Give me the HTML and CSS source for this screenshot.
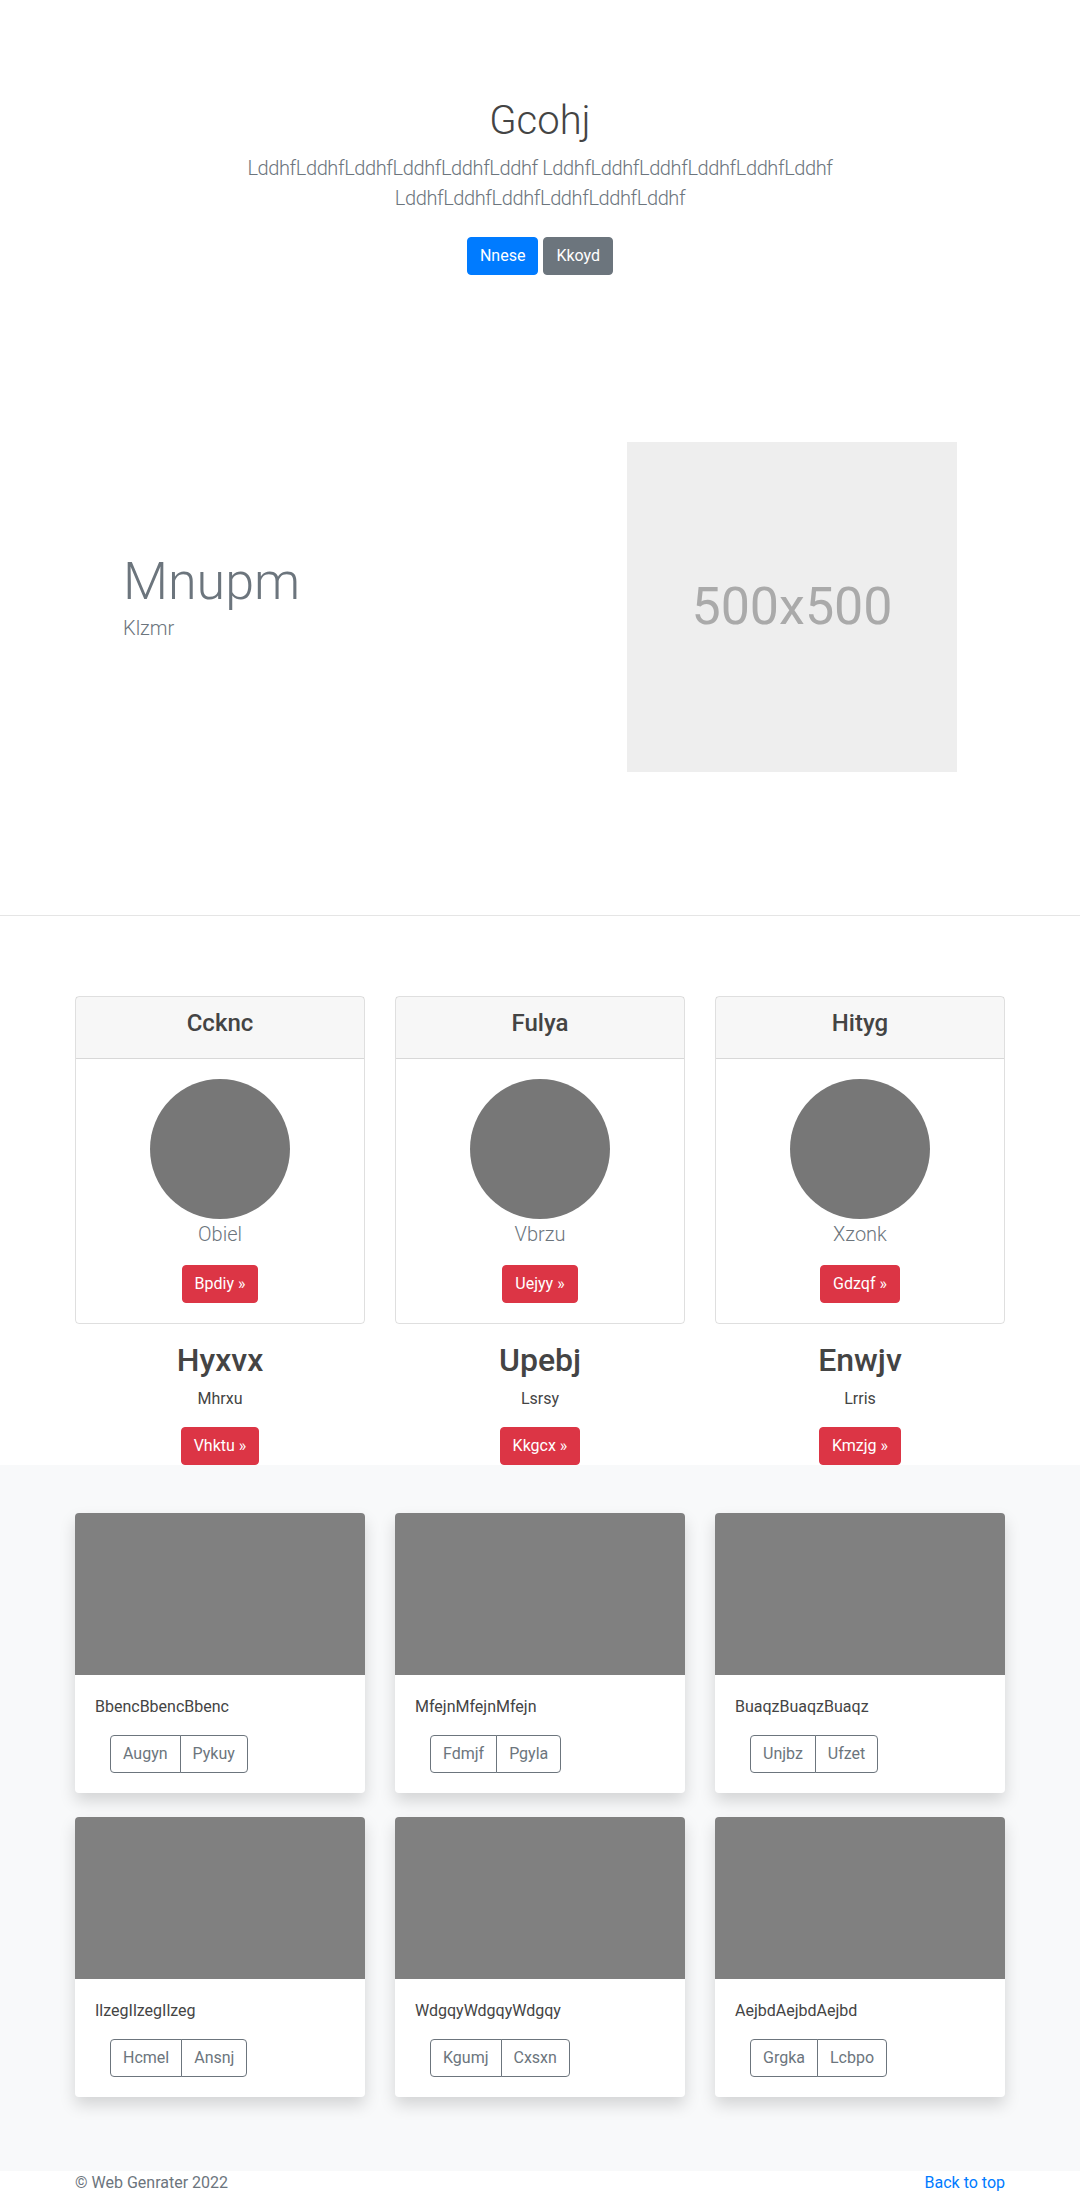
FILE: index.html
```html
<!DOCTYPE html>
<html lang="en">
<head>
<meta charset="utf-8">
<title>Gcohj</title>
<link rel="stylesheet" href="styles.css">
</head>
<body>
<header class="hero">
  <div class="hero-inner">
    <h1 class="hero-title">Gcohj</h1>
    <p class="lead">LddhfLddhfLddhfLddhfLddhfLddhf LddhfLddhfLddhfLddhfLddhfLddhf LddhfLddhfLddhfLddhfLddhfLddhf</p>
    <div class="hero-actions">
      <a class="btn btn-primary" href="#">Nnese</a>
      <a class="btn btn-secondary" href="#">Kkoyd</a>
    </div>
  </div>
</header>

<section class="featurette">
  <div class="container feature-row">
    <div class="feature-text">
      <h2 class="feature-heading">Mnupm</h2>
      <p class="feature-sub">Klzmr</p>
    </div>
    <div class="feature-media">
      <div class="placeholder"><span>500x500</span></div>
    </div>
  </div>
</section>

<hr class="divider">

<section class="marketing">
  <div class="container grid3">
    <div class="col">
      <div class="pcard">
        <div class="pcard-header"><h4>Ccknc</h4></div>
        <div class="pcard-body">
          <div class="circle"></div>
          <p class="pcard-text">Obiel</p>
          <a class="btn btn-danger" href="#">Bpdiy &raquo;</a>
        </div>
      </div>
      <h2 class="mk-title">Hyxvx</h2>
      <p class="mk-text">Mhrxu</p>
      <a class="btn btn-danger" href="#">Vhktu &raquo;</a>
    </div>
    <div class="col">
      <div class="pcard">
        <div class="pcard-header"><h4>Fulya</h4></div>
        <div class="pcard-body">
          <div class="circle"></div>
          <p class="pcard-text">Vbrzu</p>
          <a class="btn btn-danger" href="#">Uejyy &raquo;</a>
        </div>
      </div>
      <h2 class="mk-title">Upebj</h2>
      <p class="mk-text">Lsrsy</p>
      <a class="btn btn-danger" href="#">Kkgcx &raquo;</a>
    </div>
    <div class="col">
      <div class="pcard">
        <div class="pcard-header"><h4>Hityg</h4></div>
        <div class="pcard-body">
          <div class="circle"></div>
          <p class="pcard-text">Xzonk</p>
          <a class="btn btn-danger" href="#">Gdzqf &raquo;</a>
        </div>
      </div>
      <h2 class="mk-title">Enwjv</h2>
      <p class="mk-text">Lrris</p>
      <a class="btn btn-danger" href="#">Kmzjg &raquo;</a>
    </div>
  </div>
</section>

<section class="album">
  <div class="container grid3 album-grid">
    <div class="acard">
      <div class="acard-img"></div>
      <div class="acard-body">
        <p class="acard-text">BbencBbencBbenc</p>
        <div class="btn-group"><a class="btn btn-outline" href="#">Augyn</a><a class="btn btn-outline" href="#">Pykuy</a></div>
      </div>
    </div>
    <div class="acard">
      <div class="acard-img"></div>
      <div class="acard-body">
        <p class="acard-text">MfejnMfejnMfejn</p>
        <div class="btn-group"><a class="btn btn-outline" href="#">Fdmjf</a><a class="btn btn-outline" href="#">Pgyla</a></div>
      </div>
    </div>
    <div class="acard">
      <div class="acard-img"></div>
      <div class="acard-body">
        <p class="acard-text">BuaqzBuaqzBuaqz</p>
        <div class="btn-group"><a class="btn btn-outline" href="#">Unjbz</a><a class="btn btn-outline" href="#">Ufzet</a></div>
      </div>
    </div>
    <div class="acard">
      <div class="acard-img"></div>
      <div class="acard-body">
        <p class="acard-text">IlzegIlzegIlzeg</p>
        <div class="btn-group"><a class="btn btn-outline" href="#">Hcmel</a><a class="btn btn-outline" href="#">Ansnj</a></div>
      </div>
    </div>
    <div class="acard">
      <div class="acard-img"></div>
      <div class="acard-body">
        <p class="acard-text">WdgqyWdgqyWdgqy</p>
        <div class="btn-group"><a class="btn btn-outline" href="#">Kgumj</a><a class="btn btn-outline" href="#">Cxsxn</a></div>
      </div>
    </div>
    <div class="acard">
      <div class="acard-img"></div>
      <div class="acard-body">
        <p class="acard-text">AejbdAejbdAejbd</p>
        <div class="btn-group"><a class="btn btn-outline" href="#">Grgka</a><a class="btn btn-outline" href="#">Lcbpo</a></div>
      </div>
    </div>
  </div>
</section>

<footer class="footer">
  <div class="container footer-row">
    <p class="copy">&copy; Web Genrater 2022</p>
    <a class="back" href="#">Back to top</a>
  </div>
</footer>
</body>
</html>
```

FILE: styles.css
```css
* { box-sizing: border-box; }

body {
  margin: 0;
  font-family: Roboto, "Liberation Sans", sans-serif;
  font-size: 16px;
  line-height: 1.5;
  color: #212529;
  background: #fff;
}

p { margin: 0; }
h1, h2, h4 { margin: 0; }

.container {
  width: 960px;
  margin: 0 auto;
  padding: 0 15px;
}

/* Buttons */
.btn {
  display: inline-block;
  padding: 6px 12px;
  font-size: 16px;
  line-height: 24px;
  border: 1px solid transparent;
  border-radius: 4px;
  text-decoration: none;
  color: #fff;
  text-align: center;
}
.btn-primary { background: #007bff; border-color: #007bff; }
.btn-secondary { background: #6c757d; border-color: #6c757d; }
.btn-danger { background: #dc3545; border-color: #dc3545; }
.btn-outline { background: #fff; color: #6c757d; border-color: #6c757d; }

/* Hero */
.hero {
  text-align: center;
  padding: 97px 0 48px;
}
.hero-inner {
  width: 640px;
  margin: 0 auto;
}
.hero-title {
  font-size: 40px;
  line-height: 1.2;
  font-weight: 300;
  color: #444;
  margin-bottom: 8px;
}
.lead {
  font-size: 20px;
  line-height: 30px;
  font-weight: 300;
  letter-spacing: -0.4px;
  color: #6c757d;
  margin-bottom: 16px;
}
.hero-actions {
  display: flex;
  justify-content: center;
  gap: 5px;
  padding: 8px 0;
}

/* Featurette */
.featurette {
  padding: 111px 0 143px;
}
.feature-row {
  display: grid;
  grid-template-columns: 1fr 1fr;
  column-gap: 30px;
  align-items: center;
}
.feature-text {
  padding: 0 48px 16px;
}
.feature-heading {
  font-size: 52px;
  line-height: 1;
  font-weight: 300;
  color: #6c757d;
  margin-bottom: 5px;
}
.feature-sub {
  font-size: 20px;
  line-height: 30px;
  font-weight: 300;
  color: #6c757d;
}
.feature-media {
  padding: 0 48px;
  display: flex;
  justify-content: flex-end;
}
.placeholder {
  width: 330px;
  height: 330px;
  background: #eee;
  display: flex;
  align-items: center;
  justify-content: center;
  color: #aaa;
  font-size: 52px;
}

.divider {
  margin: 0;
  border: 0;
  border-top: 1px solid rgba(0, 0, 0, 0.1);
}

/* Marketing / pricing cards */
.marketing {
  padding-top: 80px;
}
.grid3 {
  display: grid;
  grid-template-columns: repeat(3, 1fr);
  column-gap: 30px;
}
.col {
  text-align: center;
}
.pcard {
  border: 1px solid rgba(0, 0, 0, 0.125);
  border-radius: 4px;
  margin-bottom: 17px;
}
.pcard-header {
  background: rgba(0, 0, 0, 0.03);
  border-bottom: 1px solid rgba(0, 0, 0, 0.125);
  padding: 12px 20px;
}
.pcard-header h4 {
  font-size: 24px;
  line-height: 1.2;
  font-weight: 500;
  color: #444;
  margin-bottom: 8px;
}
.pcard-body {
  padding: 20px;
}
.circle {
  width: 140px;
  height: 140px;
  border-radius: 50%;
  background: #777;
  margin: 0 auto;
}
.pcard-text {
  font-size: 20px;
  line-height: 30px;
  font-weight: 300;
  color: #6c757d;
  margin-bottom: 16px;
}
.mk-title {
  font-size: 32px;
  line-height: 1.2;
  font-weight: 500;
  color: #444;
  margin-bottom: 8px;
}
.mk-text {
  color: #444;
  margin-bottom: 16px;
}

/* Album */
.album {
  background: #f8f9fa;
  padding: 48px 0 50px;
}
.album-grid {
  row-gap: 0;
}
.acard {
  background: #fff;
  border-radius: 4px;
  overflow: hidden;
  box-shadow: 0 8px 16px rgba(0, 0, 0, 0.15);
  margin-bottom: 24px;
}
.acard-img {
  height: 162px;
  background: #808080;
}
.acard-body {
  padding: 20px;
}
.acard-text {
  color: #444;
  margin-bottom: 16px;
}
.btn-group {
  display: inline-flex;
  margin-left: 15px;
}
.btn-group .btn + .btn {
  margin-left: -1px;
}
.btn-group .btn:first-child {
  border-top-right-radius: 0;
  border-bottom-right-radius: 0;
}
.btn-group .btn:last-child {
  border-top-left-radius: 0;
  border-bottom-left-radius: 0;
}

/* Footer */
.footer {
  padding: 0 0 48px;
}
.footer-row {
  display: flex;
  justify-content: space-between;
}
.copy { color: #6c757d; }
.back { color: #007bff; text-decoration: none; }
```
